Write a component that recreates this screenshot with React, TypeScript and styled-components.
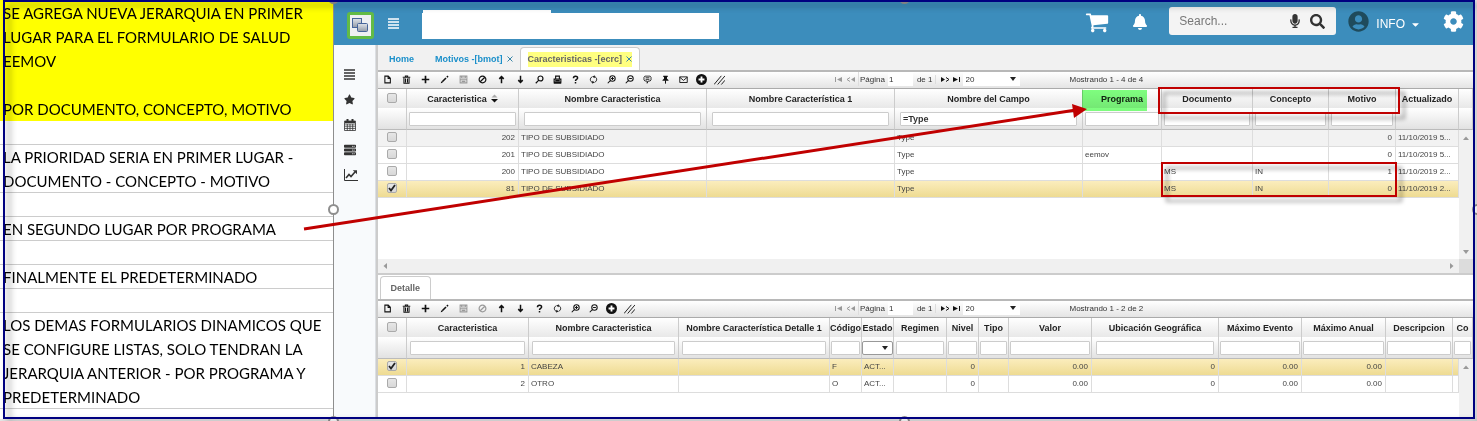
import React from 'react';
import styled, { createGlobalStyle, css } from 'styled-components';
import {
  FaStar,
  FaServer,
  FaMicrophone,
  FaSearch,
  FaBell,
  FaCog,
  FaCaretDown,
  FaUserCircle,
} from 'react-icons/fa';

const GlobalStyle = createGlobalStyle`
  *, *::before, *::after { box-sizing: border-box; }
  body {
    margin: 0;
    background: #fff;
    font-family: "Liberation Sans", Arial, sans-serif;
    font-size: 8px;
    color: #333;
  }
  button, input, select { font: inherit; color: inherit; }
`;

/* ---------- sheet ---------- */

const Sheet = styled.div`
  position: relative;
  display: flex;
  min-height: 100vh;
  padding: 0 4px 2px 0;
  overflow: hidden;
  background: #e4e4e4;
`;

const Notes = styled.aside`
  flex: 0 0 333px;
  padding-top: 1px;
  background: linear-gradient(#ff0 0 1px, #fff 1px);
  font-family: Lato, Calibri, sans-serif;
  font-size: 15px;
  line-height: 24px;
  color: #000;
`;

const Note = styled.p<{ $marked?: boolean; $open?: boolean }>`
  margin: 0;
  padding-left: 3px;
  min-height: 24px;
  white-space: nowrap;
  background: ${(p) => (p.$marked ? '#ff0' : '#fff')};
  box-shadow: ${(p) => (p.$open ? 'none' : 'inset 0 -1px #ccc')};
`;

const Capture = styled.div`
  flex: 1;
  min-width: 0;
  display: flex;
  flex-direction: column;
  border-left: 1px solid #8e8e8e;
  background: #fff;
`;

/* ---------- application header ---------- */

const TopBar = styled.header`
  display: flex;
  align-items: center;
  height: 45px;
  padding: 5px 9px 0 13px;
  background: #3c8dbc;
  color: #fff;
`;

const Logo = styled.div`
  display: flex;
  align-items: center;
  justify-content: center;
  width: 27px;
  height: 27px;
  border: 3px solid #62bb46;
  border-radius: 3px;
  background: #eef0f2;
`;

const IconButton = styled.button`
  display: flex;
  align-items: center;
  justify-content: center;
  padding: 0;
  border: 0;
  background: none;
  cursor: pointer;
`;

const MenuButton = styled(IconButton)`
  width: 13px;
  height: 27px;
  padding-bottom: 4px;
  margin-left: 13px;
`;

const BlankTitle = styled.div`
  width: 297px;
  height: 29px;
  margin-left: 22px;
  margin-right: auto;
  margin-top: -2px;
  background: linear-gradient(#fff, #fff) 1px 0 / 128px 3px no-repeat,
    linear-gradient(#fff, #fff) 0 3px / 297px 26px no-repeat;
`;

const TopActions = styled.div`
  display: flex;
  align-items: center;
  height: 34px;
  margin-top: -8px;
`;

const CartButton = styled(IconButton)`
  width: 24px;
  height: 28px;
  padding-top: 2px;
  margin-right: 23px;
`;

const BellButton = styled(IconButton)`
  width: 16px;
  height: 28px;
  padding-top: 2px;
  margin-right: 21px;
`;

const SearchBox = styled.label`
  display: flex;
  align-items: center;
  width: 167px;
  height: 28px;
  margin-right: 12px;
  padding: 0 11px 0 10px;
  border-radius: 3px;
  background: #f4f4f4;
  color: #333;
  gap: 8px;
`;

const SearchInput = styled.input`
  flex: 1;
  min-width: 0;
  padding: 0;
  border: 0;
  outline: 0;
  background: none;
  font-size: 12px;
  &::placeholder {
    color: #777;
    opacity: 1;
  }
`;

const UserButton = styled(IconButton)`
  gap: 7px;
  margin-right: 22px;
  font-size: 12px;
  color: #fff;
`;

const UserName = styled.span`
  display: flex;
  align-items: center;
  gap: 5px;
  padding-top: 6px;
`;

/* ---------- body ---------- */

const Body = styled.div`
  flex: 1;
  display: flex;
  min-height: 0;
`;

const Sidebar = styled.nav`
  display: flex;
  flex-direction: column;
  flex: 0 0 42px;
  padding: 17px 9px 0 9px;
  border-right: 1px solid #dcdfe3;
  background: #f8fafc;
`;

const SideLink = styled.a`
  display: flex;
  align-items: center;
  height: 25px;
  padding-left: 1px;
  color: #333;
`;

const Main = styled.main`
  flex: 1;
  min-width: 0;
  display: flex;
  flex-direction: column;
  border-left: 2px solid #ccc;
  background: #fff;
`;

const Tabs = styled.div`
  display: flex;
  align-items: flex-end;
  height: 25px;
  padding-left: 4px;
  background: #f1f1f1;
  font-size: 9px;
  font-weight: bold;
`;

const Tab = styled.button<{ $active?: boolean }>`
  display: flex;
  align-items: center;
  gap: 4px;
  height: 23px;
  margin-right: 7px;
  padding: 0 7px;
  border: 0;
  background: none;
  color: #1a8fca;
  & + & {
    margin-right: 0;
  }
  ${(p) =>
    p.$active &&
    css`
      border: 1px solid #ccc;
      border-bottom: 0;
      border-radius: 4px 4px 0 0;
      background: #fff;
      color: #666;
    `}
`;

const Mark = styled.mark`
  display: flex;
  align-items: center;
  gap: 4px;
  height: 15px;
  background: #ffff80;
  color: inherit;
`;

const DetailTabs = styled(Tabs)`
  height: 24px;
  padding-left: 2px;
  background: #fff;
`;

/* ---------- grid ---------- */

const Toolbar = styled.div`
  display: flex;
  align-items: center;
  height: 19px;
  padding-bottom: 2px;
  border-top: 2px solid #b8b8b8;
  border-bottom: 1px solid #aaa;
  background: linear-gradient(#fff, #e4e4e4);
  white-space: nowrap;
`;

const Tools = styled.div`
  display: flex;
  width: 455px;
`;

const Tool = styled(IconButton)<{ $wide?: boolean }>`
  width: ${(p) => (p.$wide ? '19px' : '18px')};
  height: 14px;
  color: #111;
  &:disabled {
    color: #999;
  }
`;

const Pager = styled.div`
  display: flex;
  align-items: center;
  height: 14px;
`;

const PageButton = styled(IconButton)`
  width: 12px;
  color: #111;
  &:disabled {
    color: #999;
  }
`;

const Field = styled.label`
  display: flex;
  align-items: center;
  gap: 3px;
  height: 14px;
  margin-left: 1px;
  padding-left: 1px;
  border-left: 1px solid #ddd;
`;

const PageInput = styled.input`
  width: 25px;
  height: 14px;
  padding: 0 1px;
  border: 0;
  background: #fff;
`;

const PageCount = styled.span`
  margin: 0 3px 0 4px;
  padding-right: 2px;
  border-right: 1px solid #ddd;
`;

const SelectBox = styled.div<{ $framed?: boolean }>`
  display: grid;
  align-items: center;
  width: ${(p) => (p.$framed ? '100%' : '57px')};
  height: 14px;
  border: ${(p) => (p.$framed ? '1px solid #999' : '0')};
  border-radius: ${(p) => (p.$framed ? '2px' : '0')};
  background: #fff;
  & > * {
    grid-area: 1 / 1;
  }
  & > svg {
    justify-self: end;
    margin-right: 4px;
    pointer-events: none;
  }
`;

const Select = styled.select`
  width: 100%;
  height: 12px;
  padding: 0 3px;
  border: 0;
  background: none;
  appearance: none;
`;

const Status = styled.span`
  margin-left: 50px;
`;

const Table = styled.table`
  width: 100%;
  table-layout: fixed;
  border-collapse: separate;
  border-spacing: 0;
  th,
  td {
    padding: 0;
    white-space: nowrap;
    overflow: hidden;
    text-align: center;
    vertical-align: middle;
  }
`;

const HeadRow = styled.tr`
  height: 19px;
  font-size: 9px;
  color: #222;
  th {
    background: linear-gradient(#fff, #e8e8e8);
    border-right: 1px solid #ccc;
  }
`;

const FilterRow = styled.tr`
  height: 22px;
  th {
    background: linear-gradient(#fff, #e2e2e2);
    border-right: 1px solid #ccc;
    border-bottom: 1px solid #bbb;
  }
`;

const FilterCell = styled.div<{ $pad: number }>`
  display: flex;
  padding: 0 ${(p) => p.$pad}px;
`;

const FilterInput = styled.input`
  width: 100%;
  min-width: 0;
  height: 14px;
  padding: 0 2px;
  border: 1px solid #ccc;
  border-radius: 1px;
  background: #fff;
  font-size: 9px;
  font-weight: bold;
`;

const Title = styled.span`
  display: flex;
  align-items: center;
  justify-content: center;
  gap: 4px;
`;

const BodyRow = styled.tr<{ $kind?: 'shaded' | 'selected' }>`
  height: 17px;
  color: #444;
  background: ${(p) => (p.$kind === 'shaded' ? '#f2f2f2' : '#fff')};
  td {
    padding-bottom: 1px;
    border-right: 1px solid #ddd;
    border-bottom: 1px solid #ddd;
    ${(p) => p.$kind === 'selected' && 'background: linear-gradient(#fbedbd, #eedb92);'}
  }
`;

const Value = styled.div<{ $right?: boolean }>`
  padding: 0 3px 0 2px;
  text-align: ${(p) => (p.$right ? 'right' : 'left')};
`;

const Check = styled.span`
  display: grid;
  place-items: center;
  padding-bottom: 2px;
  & > * {
    grid-area: 1 / 1;
  }
  & > svg {
    pointer-events: none;
  }
`;

const CheckInput = styled.input`
  appearance: none;
  width: 10px;
  height: 10px;
  margin: 0;
  border: 1px solid #aaa;
  border-radius: 2px;
  background: linear-gradient(#e6e6e6, #d8d8d8);
`;

const Scroller = styled.div<{ $tall?: boolean }>`
  display: flex;
  align-items: stretch;
  ${(p) => (p.$tall ? 'min-height: 129px;' : 'flex: 1; min-height: 58px;')}
`;

const Rows = styled.div`
  flex: 1;
  min-width: 0;
`;

const VBar = styled.div`
  display: flex;
  flex-direction: column;
  align-items: center;
  justify-content: space-between;
  flex: 0 0 14px;
  padding: 5px 0 4px;
  background: #f1f1f1;
`;

const HBar = styled.div`
  display: flex;
  height: 16px;
  border-bottom: 2px solid #ccc;
  background: #f0f0f0;
`;

const HTrack = styled.div`
  flex: 1;
  display: flex;
  align-items: center;
  justify-content: space-between;
  padding: 0 4px;
`;

const Corner = styled.div`
  width: 14px;
  background: #dcdcdc;
`;

/* ---------- annotations drawn over the sheet ---------- */

const Frame = styled.div`
  position: absolute;
  inset: 0 2px 2px 3px;
  border: 2px solid #000080;
  filter: drop-shadow(5px 4px 3px rgba(0, 0, 0, 0.45));
  pointer-events: none;
`;

const RedBox = styled.div<{ $x: number; $y: number; $w: number; $h: number }>`
  position: absolute;
  left: ${(p) => p.$x}px;
  top: ${(p) => p.$y}px;
  width: ${(p) => p.$w}px;
  height: ${(p) => p.$h}px;
  border: 2px solid #c00000;
  filter: drop-shadow(5px 5px 2px rgba(0, 0, 0, 0.4));
  pointer-events: none;
`;

const Highlight = styled.div`
  position: absolute;
  left: 1082px;
  top: 90px;
  width: 65px;
  height: 21px;
  background: #80ff80;
  mix-blend-mode: multiply;
  pointer-events: none;
`;

const ArrowLayer = styled.svg`
  position: absolute;
  left: 0;
  top: 0;
  pointer-events: none;
`;

const Handle = styled.span<{ $x: string; $y: string }>`
  position: absolute;
  left: ${(p) => p.$x};
  top: ${(p) => p.$y};
  width: 11px;
  height: 11px;
  margin: -5px 0 0 -5px;
  border: 2px solid #8e8e8e;
  border-radius: 50%;
  background: #fff;
`;

/* ---------- icons ---------- */

const s = { fill: 'none', stroke: 'currentColor', strokeWidth: 1.4 } as const;
const f = { fill: 'currentColor' } as const;

const glyphs: Record<string, React.ReactNode> = {
  Nuevo: <path {...s} d="M2.5 1.5h4.5l2.8 2.8v6.2H2.5zM6.8 1.5v3h3" />,
  Eliminar: <path {...s} d="M1 3h10M4.5 3V1.2h3V3M2.6 4v7h6.8V4M4.7 4.5v5.5M7.3 4.5v5.5" />,
  Agregar: <path {...s} strokeWidth={2.2} d="M6 1v10M1 6h10" />,
  Editar: (
    <>
      <path {...s} strokeWidth={2.2} d="M3 9l5-5" />
      <path {...f} d="M1 11l.8-2.8 2 2zM8.4 2.2l1.6-1.4 1.4 1.4L10 3.8z" />
    </>
  ),
  Guardar: <path {...s} d="M1.5 1.5h9v9h-9zM3.5 1.5V4h5V1.5M1.5 6.3h9M3.5 8.5h5" />,
  Cancelar: <path {...s} strokeWidth={1.6} d="M6 1.5a4.5 4.5 0 1 0 0 9a4.5 4.5 0 1 0 0-9M3 9l6-6" />,
  Subir: <path {...s} strokeWidth={2} d="M6 11V2.5M3 5.2L6 2.2l3 3" />,
  Bajar: <path {...s} strokeWidth={2} d="M6 1v8.5M3 6.8l3 3 3-3" />,
  Buscar: <path {...s} strokeWidth={1.6} d="M7.3 1.3a3.3 3.3 0 1 0 0 6.6a3.3 3.3 0 1 0 0-6.6M4.8 7.2L1 11" />,
  Imprimir: <path {...s} strokeWidth={1.5} d="M3.5 5V1.5h5V5M1.5 9.5V5.5h9v4zM3 7.5h6M1 10.8h10" />,
  Ayuda: (
    <>
      <path {...s} strokeWidth={2} d="M3.3 4.2C3.3 1 8.8 1 8.8 3.9C8.8 6 6 5.8 6 8" />
      <path {...f} d="M5 9.3h2v2H5z" />
    </>
  ),
  Recargar: (
    <>
      <path {...s} strokeWidth={1.2} d="M4.5 2.2C.6 4 1 9 5 10M7.5 9.8C11.4 8 11 3 7 2" />
      <path {...f} d="M4.4 7.8l3 2-3 2zM7.6.2l-3 2 3 2z" />
    </>
  ),
  Acercar: (
    <path {...s} d="M7.3 1a3.6 3.6 0 1 0 0 7.2a3.6 3.6 0 1 0 0-7.2M4.6 7.3L1 11M5.4 4.6h3.8M7.3 2.7v3.8" />
  ),
  Alejar: <path {...s} d="M7.3 1a3.6 3.6 0 1 0 0 7.2a3.6 3.6 0 1 0 0-7.2M4.6 7.3L1 11M5.4 4.6h3.8" />,
  Comentario: (
    <path {...s} strokeWidth={1.1} d="M2.5 1.5h7l1.2 1.5v3.5L9.5 8H7l-1.5 3V8h-3L1.3 6.5V3zM3.5 3.7h5M3.5 5.8h5" />
  ),
  Fijar: (
    <>
      <path {...f} d="M3 1h6v1.5H8V5l2 1.5v1H2v-1L4 5V2.5H3z" />
      <path {...s} d="M6 7v4.5" />
    </>
  ),
  Correo: <path {...s} strokeWidth={1.2} d="M1 2.5h10v7.5H1zM1 3l5 4.2L11 3" />,
  Insertar: (
    <>
      <circle cx="6" cy="6" r="6" {...f} />
      <path {...s} stroke="#fff" strokeWidth={2} d="M6 2.8v6.4M2.8 6h6.4" />
    </>
  ),
  Ajustar: <path {...s} strokeWidth={1} d="M0 11.5L8 2M4 11.5L12 2M8 11.5l4-4.7" />,
};

const Glyph = ({ name }: { name: string }) => {
  const size = name === 'Insertar' || name === 'Ajustar' ? 11 : 9;
  return (
    <svg width={size} height={size} viewBox="0 0 12 12">
      {glyphs[name]}
    </svg>
  );
};

const Triangle = ({ dir, color = '#999' }: { dir: 'up' | 'down' | 'left' | 'right'; color?: string }) => {
  const d = {
    up: 'M0 5l3-3.5 3 3.5z',
    down: 'M0 1l3 4 3-4z',
    left: 'M5 0L1.5 3 5 6z',
    right: 'M1 0l3.5 3L1 6z',
  }[dir];
  return (
    <svg width="6" height="6" viewBox="0 0 6 6">
      <path d={d} fill={color} />
    </svg>
  );
};

const SortMark = () => (
  <svg width="7" height="9" viewBox="0 0 7 9">
    <path d="M.5 3.5L3.5.5l3 3z" fill="#aaa" />
    <path d="M0 5h7L3.5 8.5z" fill="#111" />
  </svg>
);

const CloseMark = () => (
  <svg width="6" height="6" viewBox="0 0 6 6">
    <path d="M.5.5l5 5M5.500.5l-5 5" fill="none" stroke="#3a86a8" />
  </svg>
);

const Bars = () => (
  <svg width="11" height="11" viewBox="0 0 11 11">
    <path d="M0 1h11M0 4h11M0 7h11M0 10h11" stroke="currentColor" strokeWidth="1.4" />
  </svg>
);

const CalendarGrid = () => (
  <svg width="12" height="12" viewBox="0 0 12 12">
    <path d="M.5 2h11v9.5H.5zM.5 5h11M.5 7.200h11M.5 9.400h11M3.300 5v6.500M6 5v6.500M8.700 5v6.500" fill="none" stroke="currentColor" strokeWidth=".8" />
    <path d="M1 2h10v2H1zM2.500 0h2v3h-2zM7.500 0h2v3h-2z" fill="currentColor" />
  </svg>
);

const TrendChart = () => (
  <svg width="14" height="12" viewBox="0 0 14 12">
    <path d="M.5 0v11.500H14" fill="none" stroke="currentColor" />
    <path d="M2 9l3-3.500 2 2L11 3" fill="none" stroke="currentColor" strokeWidth="1.600" />
    <path d="M8.800 1.200H13v4z" fill="currentColor" />
  </svg>
);

const Cart = () => (
  <svg width="24" height="24" viewBox="0 0 1792 1792">
    <path
      fill="#fff"
      d="M704 1536q0 52-38 90t-90 38-90-38-38-90 38-90 90-38 90 38 38 90zm896 0q0 52-38 90t-90 38-90-38-38-90 38-90 90-38 90 38 38 90zm128-1088v512q0 24-16.5 42.5t-40.5 21.5l-1044 122q13 60 13 70 0 16-24 64h920q26 0 45 19t19 45-19 45-45 19h-1024q-26 0-45-19t-19-45q0-11 8-31.5t16-36 21.5-40 15.5-29.5l-177-823h-204q-26 0-45-19t-19-45 19-45 45-19h256q16 0 28.5 6.5t19.5 15.5 13 24.5 8 26 5.5 29.5 4.5 26h1201q26 0 45 19t19 45z"
    />
  </svg>
);

const WindowsLogo = () => (
  <svg width="19" height="19" viewBox="0 0 19 19">
    <defs>
      <linearGradient id="pane" x1="0" y1="0" x2="0" y2="1">
        <stop offset="0" stopColor="#dfe4ea" />
        <stop offset="1" stopColor="#929aa6" />
      </linearGradient>
    </defs>
    <rect x="1.5" y="2.5" width="9" height="9" fill="url(#pane)" stroke="#46659a" />
    <rect x="6.5" y="7.5" width="10" height="8" rx="1" fill="url(#pane)" stroke="#46659a" />
  </svg>
);

const PageArrow = ({ kind }: { kind: 'first' | 'prev' | 'next' | 'last' }) => {
  const d = {
    first: 'M1 1h1v5H1zM8 1v5L3 3.5z',
    prev: 'M9 1v5L5 3.5z',
    next: 'M1 1v5l4-2.5z',
    last: 'M1 1v5l5-2.5zM7 1h1v5H7z',
  }[kind];
  const chevron = { prev: 'M4 1.5L1 3.5l3 2', next: 'M6 1.5l3 2-3 2', first: '', last: '' }[kind];
  return (
    <svg width="10" height="7" viewBox="0 0 10 7">
      <path d={d} fill="currentColor" />
      <path d={chevron} fill="none" stroke="currentColor" />
    </svg>
  );
};

/* ---------- grid parts ---------- */

type Column = { title: string; width: number; right?: boolean; pad?: number; filter?: 'none' | 'select'; value?: string; sorted?: boolean };
type Row = { id: string; kind?: 'shaded' | 'selected'; cells: string[] };

const CheckBox = ({ label, checked = false }: { label: string; checked?: boolean }) => (
  <Check>
    <CheckInput type="checkbox" aria-label={label} defaultChecked={checked} />
    {checked && (
      <svg width="8" height="8" viewBox="0 0 8 8">
        <path d="M1 4l2 2.5L7 1" fill="none" stroke="#222" strokeWidth="1.8" />
      </svg>
    )}
  </Check>
);

const GridToolbar = ({ name, tools, disabled, total }: { name: string; tools: string[]; disabled: string[]; total: string }) => (
  <Toolbar>
    <Tools>
      {tools.map((t, i) => (
        <Tool key={t} type="button" aria-label={t} $wide={i < 8} disabled={disabled.includes(t)}>
          <Glyph name={t} />
        </Tool>
      ))}
    </Tools>
    <Pager>
      <PageButton type="button" aria-label="Primera" disabled><PageArrow kind="first" /></PageButton>
      <PageButton type="button" aria-label="Anterior" disabled><PageArrow kind="prev" /></PageButton>
      <Field>
        Página
        <PageInput defaultValue="1" />
      </Field>
      <PageCount>de 1</PageCount>
      <PageButton type="button" aria-label="Siguiente"><PageArrow kind="next" /></PageButton>
      <PageButton type="button" aria-label="Última"><PageArrow kind="last" /></PageButton>
      <SelectBox>
        <Select aria-label={`Filas de ${name}`} defaultValue="20">
          <option>20</option>
          <option>50</option>
        </Select>
        <Triangle dir="down" color="#222" />
      </SelectBox>
    </Pager>
    <Status>{total}</Status>
  </Toolbar>
);

const GridHead = ({ name, columns, gutter }: { name: string; columns: Column[]; gutter: React.ReactNode }) => (
  <Table aria-label={`${name}: columnas`}>
    <colgroup>
      <col style={{ width: 29 }} />
      {columns.map((c) => (
        <col key={c.title} style={{ width: c.width }} />
      ))}
      {gutter ? <col style={{ width: 20 }} /> : <col style={{ width: 14 }} />}
    </colgroup>
    <thead>
      <HeadRow>
        <th><CheckBox label={`Todas las filas de ${name}`} /></th>
        {columns.map((c) => (
          <th key={c.title} scope="col">
            <Title>
              {c.title}
              {c.sorted && <SortMark />}
            </Title>
          </th>
        ))}
        <th>{gutter}</th>
      </HeadRow>
      <FilterRow>
        <th />
        {columns.map((c) => (
          <th key={c.title}>
            {c.filter !== 'none' && (
              <FilterCell $pad={c.filter === 'select' ? 0 : c.pad ?? 2}>
                {c.filter === 'select' ? (
                  <SelectBox $framed>
                    <Select aria-label={`Filtrar ${c.title}`} defaultValue="">
                      <option value=""></option>
                      <option>ACTIVO</option>
                    </Select>
                    <Triangle dir="down" color="#222" />
                  </SelectBox>
                ) : (
                  <FilterInput aria-label={`Filtrar ${c.title}`} defaultValue={c.value ?? ''} />
                )}
              </FilterCell>
            )}
          </th>
        ))}
        <th>
          {gutter && (
            <FilterCell $pad={1}>
              <FilterInput aria-label="Filtrar Co" />
            </FilterCell>
          )}
        </th>
      </FilterRow>
    </thead>
  </Table>
);

const GridRows = ({ name, columns, rows, extra }: { name: string; columns: Column[]; rows: Row[]; extra?: boolean }) => (
  <Rows>
    <Table aria-label={name}>
      <colgroup>
        <col style={{ width: 29 }} />
        {columns.map((c) => (
          <col key={c.title} style={{ width: c.width }} />
        ))}
        {extra && <col style={{ width: 6 }} />}
      </colgroup>
      <tbody>
        {rows.map((r) => (
          <BodyRow key={r.id} $kind={r.kind}>
            <td><CheckBox label={`Fila ${r.id}`} checked={r.kind === 'selected'} /></td>
            {columns.map((c, i) => (
              <td key={c.title}>
                <Value $right={c.right}>{r.cells[i]}</Value>
              </td>
            ))}
            {extra && <td />}
          </BodyRow>
        ))}
      </tbody>
    </Table>
  </Rows>
);

/* ---------- data ---------- */

const mainColumns: Column[] = [
  { title: 'Caracteristica', width: 112, right: true, sorted: true },
  { title: 'Nombre Caracteristica', width: 188, pad: 5 },
  { title: 'Nombre Característica 1', width: 188, pad: 5 },
  { title: 'Nombre del Campo', width: 188, pad: 5, value: '=Type' },
  { title: 'Programa', width: 79 },
  { title: 'Documento', width: 91 },
  { title: 'Concepto', width: 76 },
  { title: 'Motivo', width: 67, right: true },
  { title: 'Actualizado', width: 63, filter: 'none' },
];

const mainRows: Row[] = [
  { id: '202', kind: 'shaded', cells: ['202', 'TIPO DE SUBSIDIADO', '', 'Type', '', '', '', '0', '11/10/2019 5...'] },
  { id: '201', cells: ['201', 'TIPO DE SUBSIDIADO', '', 'Type', 'eemov', '', '', '0', '11/10/2019 5...'] },
  { id: '200', cells: ['200', 'TIPO DE SUBSIDIADO', '', 'Type', '', 'MS', 'IN', '1', '11/10/2019 2...'] },
  { id: '81', kind: 'selected', cells: ['81', 'TIPO DE SUBSIDIADO', '', 'Type', '', 'MS', 'IN', '0', '11/10/2019 2...'] },
];

const detailColumns: Column[] = [
  { title: 'Caracteristica', width: 122, right: true, pad: 3 },
  { title: 'Nombre Caracteristica', width: 150, pad: 3 },
  { title: 'Nombre Característica Detalle 1', width: 151, pad: 3 },
  { title: 'Código', width: 32, pad: 1 },
  { title: 'Estado', width: 32, filter: 'select' },
  { title: 'Regimen', width: 53 },
  { title: 'Nivel', width: 32, right: true, pad: 1 },
  { title: 'Tipo', width: 30, pad: 1 },
  { title: 'Valor', width: 83, right: true, pad: 1 },
  { title: 'Ubicación Geográfica', width: 127, right: true, pad: 4 },
  { title: 'Máximo Evento', width: 83, right: true, pad: 1 },
  { title: 'Máximo Anual', width: 84, right: true, pad: 1 },
  { title: 'Descripcion', width: 67, pad: 1 },
];

const detailRows: Row[] = [
  { id: '1', kind: 'selected', cells: ['1', 'CABEZA', '', 'F', 'ACT...', '', '0', '', '0.00', '0', '0.00', '0.00', ''] },
  { id: '2', cells: ['2', 'OTRO', '', 'O', 'ACT...', '', '0', '', '0.00', '0', '0.00', '0.00', ''] },
];

const mainTools = [
  'Nuevo', 'Eliminar', 'Agregar', 'Editar', 'Guardar', 'Cancelar', 'Subir', 'Bajar', 'Buscar', 'Imprimir',
  'Ayuda', 'Recargar', 'Acercar', 'Alejar', 'Comentario', 'Fijar', 'Correo', 'Insertar', 'Ajustar',
];
const detailTools = [
  'Nuevo', 'Eliminar', 'Agregar', 'Editar', 'Guardar', 'Cancelar', 'Subir', 'Bajar',
  'Ayuda', 'Recargar', 'Acercar', 'Alejar', 'Insertar', 'Ajustar',
];

const sideItems = [
  { label: 'Menú', icon: <Bars /> },
  { label: 'Favoritos', icon: <FaStar size={11} /> },
  { label: 'Calendario', icon: <CalendarGrid /> },
  { label: 'Procesos', icon: <FaServer size={12} /> },
  { label: 'Indicadores', icon: <TrendChart /> },
];

const handles: [string, string][] = [
  ['333px', '-2px'], ['904px', '-2px'], ['333px', '209px'], ['100%', '209px'], ['333px', '100%'], ['904px', '100%'],
];

export default function App() {
  return (
    <Sheet>
      <GlobalStyle />
      <Notes>
        <Note $marked $open>
          SE AGREGA NUEVA JERARQUIA EN PRIMER<br />
          LUGAR PARA EL FORMULARIO DE SALUD<br />
          EEMOV
        </Note>
        <Note $marked $open />
        <Note $marked $open>POR DOCUMENTO, CONCEPTO, MOTIVO</Note>
        <Note />
        <Note>
          LA PRIORIDAD SERIA EN PRIMER LUGAR -<br />
          DOCUMENTO - CONCEPTO - MOTIVO
        </Note>
        <Note />
        <Note>EN SEGUNDO LUGAR POR PROGRAMA</Note>
        <Note />
        <Note>FINALMENTE EL PREDETERMINADO</Note>
        <Note />
        <Note>
          LOS DEMAS FORMULARIOS DINAMICOS QUE<br />
          SE CONFIGURE LISTAS, SOLO TENDRAN LA<br />
          JERARQUIA ANTERIOR - POR PROGRAMA Y<br />
          PREDETERMINADO
        </Note>
      </Notes>

      <Capture>
        <TopBar>
          <Logo><WindowsLogo /></Logo>
          <MenuButton type="button" aria-label="Menú"><Bars /></MenuButton>
          <BlankTitle />
          <TopActions>
            <CartButton type="button" aria-label="Carrito"><Cart /></CartButton>
            <BellButton type="button" aria-label="Notificaciones"><FaBell size={16} color="#fff" /></BellButton>
            <SearchBox>
              <SearchInput type="text" placeholder="Search..." aria-label="Search" />
              <FaMicrophone size={14} />
              <FaSearch size={15} />
            </SearchBox>
            <UserButton type="button">
              <FaUserCircle size={21} color="#1f4b5c" />
              <UserName>INFO <FaCaretDown size={11} /></UserName>
            </UserButton>
            <IconButton type="button" aria-label="Configuración"><FaCog size={21} color="#fff" /></IconButton>
          </TopActions>
        </TopBar>

        <Body>
          <Sidebar>
            {sideItems.map(({ label, icon }) => (
              <SideLink key={label} href="#" aria-label={label}>{icon}</SideLink>
            ))}
          </Sidebar>

          <Main>
            <Tabs>
              <Tab type="button">Home</Tab>
              <Tab type="button">Motivos -[bmot] <CloseMark /></Tab>
              <Tab type="button" $active>
                <Mark>Caracteristicas -[ecrc] <CloseMark /></Mark>
              </Tab>
            </Tabs>
            <GridToolbar name="características" tools={mainTools} disabled={['Guardar']} total="Mostrando 1 - 4 de 4" />
            <GridHead name="características" columns={mainColumns} gutter={null} />
            <Scroller $tall>
              <GridRows name="Características" columns={mainColumns} rows={mainRows} />
              <VBar><Triangle dir="up" /><Triangle dir="down" /></VBar>
            </Scroller>
            <HBar>
              <HTrack><Triangle dir="left" /><Triangle dir="right" /></HTrack>
              <Corner />
            </HBar>

            <DetailTabs>
              <Tab type="button" $active>&nbsp;Detalle&nbsp;</Tab>
            </DetailTabs>
            <GridToolbar name="detalle" tools={detailTools} disabled={['Guardar', 'Cancelar']} total="Mostrando 1 - 2 de 2" />
            <GridHead name="detalle" columns={detailColumns} gutter="Co" />
            <Scroller>
              <GridRows name="Detalle" columns={detailColumns} rows={detailRows} extra />
              <VBar><Triangle dir="up" /></VBar>
            </Scroller>
          </Main>
        </Body>
      </Capture>

      {handles.map(([x, y]) => (
        <Handle key={x + y} $x={x} $y={y} />
      ))}
      <Highlight />
      <RedBox $x={1158} $y={87} $w={242} $h={27} />
      <RedBox $x={1161} $y={162} $w={236} $h={35} />
      <ArrowLayer width="1100" height="240" viewBox="0 0 1100 240">
        <path d="M304 229L1076 110" stroke="#c00000" strokeWidth="3" fill="none" />
        <path d="M1087 109l-15-5 2 14z" fill="#c00000" />
      </ArrowLayer>
      <Frame />
    </Sheet>
  );
}
